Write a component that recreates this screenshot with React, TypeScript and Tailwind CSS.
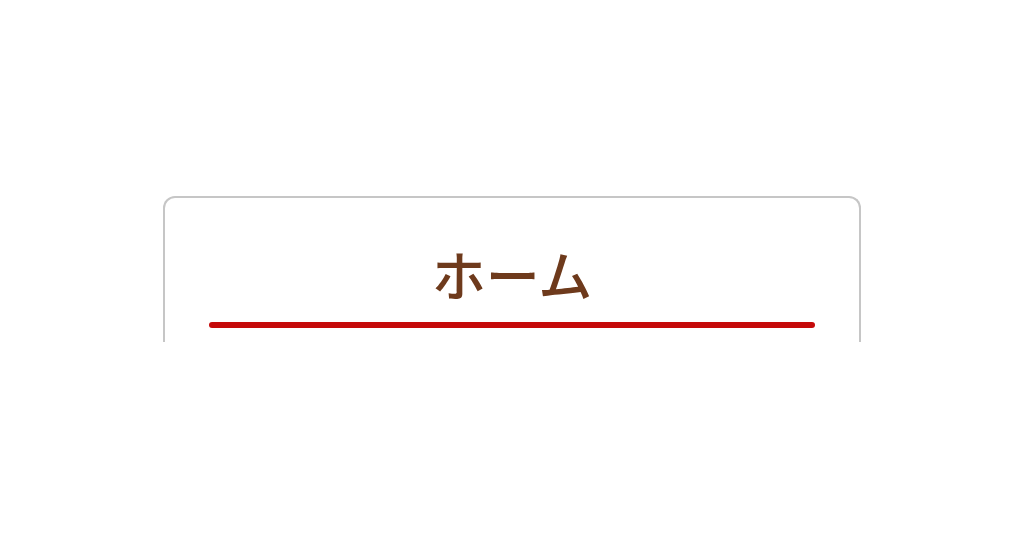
export default function App() {
  return (
    <div className="min-h-[538px] w-full bg-white flex justify-center pt-[196px]">
      <div className="w-[698px] h-[146px] border-2 border-b-0 border-[#c6c6c6] rounded-t-[12px] px-[44px] pt-[49px]">
        <h1
          className="text-center text-[54px] leading-none font-medium text-[#6e3a1c]"
          style={{ fontFamily: '"Noto Sans CJK JP", "Noto Sans", sans-serif' }}
        >
          ホーム
        </h1>
        <div className="mt-[21px] h-[6px] rounded-full bg-[#c50a0a]" />
      </div>
    </div>
  );
}
